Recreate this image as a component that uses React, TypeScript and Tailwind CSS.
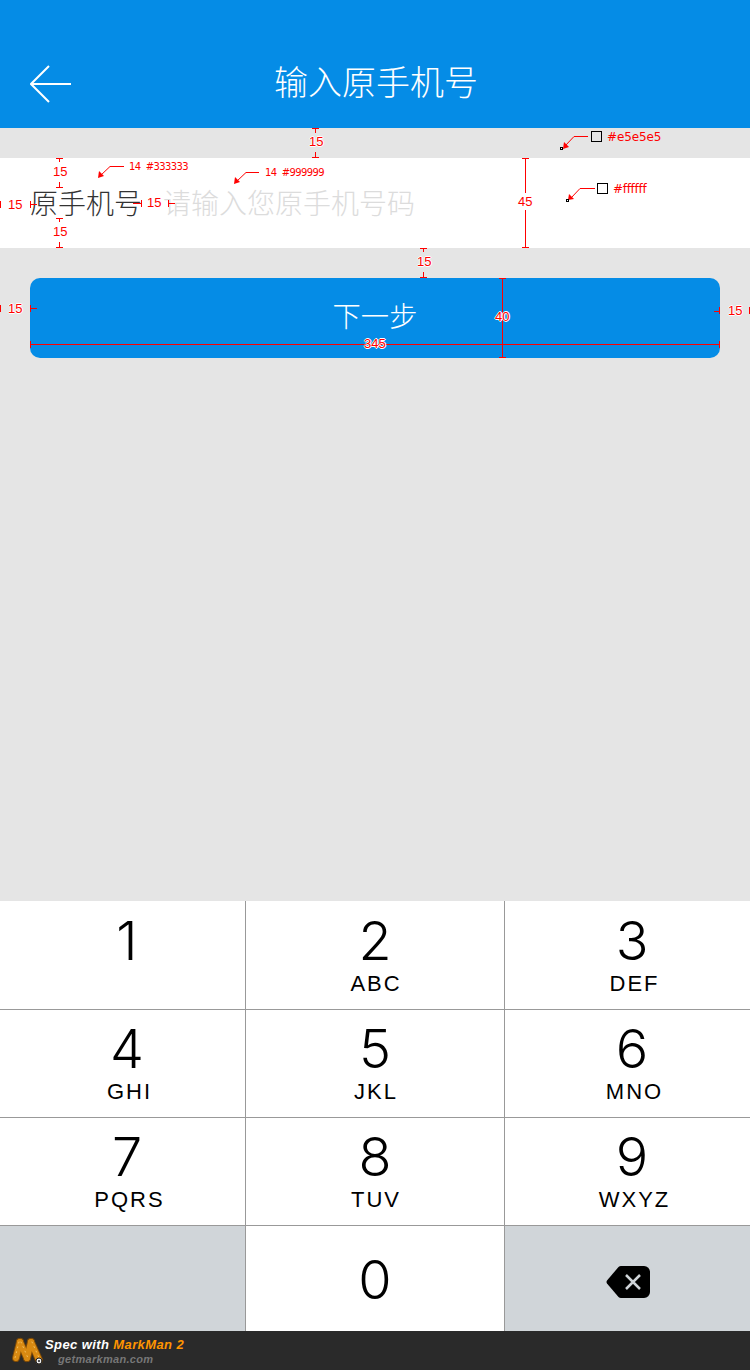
const CJK = "font-['Noto_Sans_CJK_SC','Noto_Sans',sans-serif]"

const keys = [
  { d: "1", l: "" },
  { d: "2", l: "ABC" },
  { d: "3", l: "DEF" },
  { d: "4", l: "GHI" },
  { d: "5", l: "JKL" },
  { d: "6", l: "MNO" },
  { d: "7", l: "PQRS" },
  { d: "8", l: "TUV" },
  { d: "9", l: "WXYZ" },
]

function Key({ d, l }: { d: string; l: string }) {
  return (
    <div className="h-[108px] [&:nth-child(-n+3)]:h-[109px] [&:nth-child(-n+3)]:pt-[7px] bg-white border-b border-[#999999] border-l [&:nth-child(3n+1)]:border-l-0 [&:nth-child(3n+1)]:pl-[9px] [&:nth-child(3n)]:pl-[9px] [&:nth-child(3n+1)_.letters]:ml-[5px] [&:nth-child(3n)_.letters]:ml-[5px] flex flex-col items-center pt-[6px] text-black">
      <div className="text-[54px] leading-[65px] font-light font-['Inter',Arial,sans-serif]">{d}</div>
      <div className="letters ml-[2px] text-[22px] leading-[26px] tracking-[2px] mt-[-2px] font-['Liberation_Sans',Arial,sans-serif]">{l}</div>
    </div>
  )
}

// red spec labels from the MarkMan export
function Num({ className, children }: { className: string; children: React.ReactNode }) {
  return (
    <span className={"absolute text-[13px] text-[#ff0000] font-['Liberation_Sans',sans-serif] leading-none whitespace-nowrap [text-shadow:1px_0_0_#fff,-1px_0_0_#fff,0_1px_0_#fff,0_-1px_0_#fff] " + className}>
      {children}
    </span>
  )
}

function Note({ className, children }: { className: string; children: React.ReactNode }) {
  return (
    <span className={"absolute text-[#ff0000] font-['DejaVu_Sans',sans-serif] leading-none whitespace-nowrap " + className}>
      {children}
    </span>
  )
}

function SpecOverlay() {
  const vert = [
    [315, 128, 158, 133, 152],
    [59, 158, 188, 162, 182],
    [59, 218, 248, 222, 242],
    [525, 158, 248, 193, 210],
    [423, 248, 278, 252, 272],
  ]
  return (
    <>
      <svg className="absolute inset-0 pointer-events-none" width="750" height="1370" shapeRendering="crispEdges">
        <g stroke="#ff0000" strokeWidth="1" fill="none">
          {vert.map(([x, a, b, g1, g2]) => (
            <g key={`${x}-${a}`}>
              <path d={`M${x + 0.5} ${a}V${g1}M${x + 0.5} ${g2}V${b}`} />
              <path d={`M${x - 3} ${a + 0.5}H${x + 4}M${x - 3} ${b - 0.5}H${x + 4}`} />
            </g>
          ))}
          <path d="M0.5 201V208M30.5 201V208M30 204.5H37" />
          <path d="M141.5 200V207M133 203.500H141M168.5 200V207M168 203.500H175" />
          <path d="M0.5 305V312M30.5 305V312M30 308.500H37" />
          <path d="M719.5 307V314M714 311.500H720M749.5 307V314" />
          <path d="M502.5 278V358M499 278.5H506M499 357.5H506M30.5 341V348M719.5 341V348M30 344.5H720" />
        </g>
        <g shapeRendering="auto" stroke="#ff0000" fill="none">
          <path d="M124 166.5H110L100 176" />
          <path d="M259 172.5H246L236 182" />
          <path d="M588 136.5H574L565 146" />
          <path d="M595 188.5H580L571 198" />
        </g>
        <g shapeRendering="auto" fill="#ff0000">
          <path d="M98 178L99 171L104 176Z" />
          <path d="M234 184L235 177L240 182Z" />
          <path d="M563 149L564 142L569 147Z" />
          <path d="M568 200L569 194L574 199Z" />
        </g>
        <g fill="#fff" stroke="#000">
          <rect x="591.5" y="131.5" width="10" height="10" fill="none" />
          <rect x="597.5" y="183.5" width="10" height="10" fill="none" />
          <rect x="560.5" y="147.5" width="2" height="2" />
          <rect x="566.5" y="199.5" width="2" height="2" />
        </g>
      </svg>
      <Num className="left-[309px] top-[135px]">15</Num>
      <Num className="left-[53px] top-[165px]">15</Num>
      <Num className="left-[53px] top-[225px]">15</Num>
      <Num className="left-[8px] top-[198px]">15</Num>
      <Num className="left-[147px] top-[196px]">15</Num>
      <Num className="left-[518px] top-[195px]">45</Num>
      <Num className="left-[417px] top-[255px]">15</Num>
      <Num className="left-[8px] top-[302px]">15</Num>
      <Num className="left-[728px] top-[304px]">15</Num>
      <Num className="left-[495px] top-[310px]">40</Num>
      <Num className="left-[364px] top-[337px]">345</Num>
      <Note className="left-[129px] top-[162px] text-[10px] tracking-[-0.6px]">14&nbsp;&nbsp;#333333</Note>
      <Note className="left-[265px] top-[168px] text-[10px] tracking-[-0.6px]">14&nbsp;&nbsp;#999999</Note>
      <Note className="left-[607px] top-[131px] text-[12px] tracking-[-0.1px]">#e5e5e5</Note>
      <Note className="left-[613px] top-[183px] text-[12px] tracking-[-0.3px]">#ffffff</Note>
    </>
  )
}

export default function App() {
  return (
    <div className={"relative w-[750px] h-[1370px] overflow-hidden flex flex-col bg-[#e5e5e5] " + CJK}>
      <header className="h-[128px] pt-[40px] shrink-0 bg-[#058ce6] px-[30px] grid grid-cols-[1fr_auto_1fr] items-center text-white">
        <svg width="42" height="38" viewBox="0 0 42 38" fill="none" stroke="#fff" strokeWidth="2">
          <path d="M19 1L1 19L19 37M1 19H41" />
        </svg>
        <h1 className="text-[34px] font-light leading-none ml-[2px] mb-[7px]">输入原手机号</h1>
        <div />
      </header>

      <div className="mt-[30px] h-[90px] shrink-0 bg-white flex items-center px-[30px] pb-[2px] gap-[21px] text-[28px] font-light">
        <span className="text-[#333333]">原手机号</span>
        <span className="text-[#dcdcdc]">请输入您原手机号码</span>
      </div>

      <button className="mt-[30px] mx-[30px] h-[80px] shrink-0 rounded-[10px] bg-[#058ce6] text-white text-[28.3px] font-light pb-[5px]">
        下一步
      </button>

      <div className="mt-auto grid grid-cols-[245px_259px_246px]">
        {keys.map((k) => (
          <Key key={k.d} d={k.d} l={k.l} />
        ))}
        <div className="h-[105px] bg-[#d0d5d9]" />
        <div className="h-[105px] bg-white border-l border-[#999999] flex justify-center pt-[21px] text-black text-[54px] leading-[65px] font-light font-['Inter',Arial,sans-serif]">
          0
        </div>
        <div className="h-[105px] bg-[#d0d5d9] border-l border-[#999999] flex justify-center pt-[40px]">
          <svg width="44" height="32" viewBox="0 0 44 32">
            <path d="M15 0H38A6 6 0 0 1 44 6V26A6 6 0 0 1 38 32H15Q13.500 32 12.500 31L1 17.500Q0 16 1 14.500L12.500 1Q13.500 0 15 0Z" fill="#000" />
            <path d="M20 9L34 23M34 9L20 23" stroke="#d0d5d9" strokeWidth="2.500" />
          </svg>
        </div>
      </div>

      <footer className="h-[39px] shrink-0 bg-[#2a2a2a] flex items-start pl-[12px] pt-[6px] gap-[1px]">
        <svg width="32" height="28" viewBox="0 0 32 28" fill="none" strokeLinecap="round">
          <g stroke="#7d4a08" strokeWidth="8">
            <path d="M8 5L4 21" />
            <path d="M8 5L15 21" />
            <path d="M19 5L15 21" />
            <path d="M19 5L27 23" />
          </g>
          <g stroke="#d98a12" strokeWidth="6">
            <path d="M8 5L4 21" />
            <path d="M8 5L15 21" />
            <path d="M19 5L15 21" />
            <path d="M19 5L27 23" />
          </g>
          <g stroke="#f5c060" strokeWidth="1" strokeDasharray="1 4">
            <path d="M7 5L3 21" />
            <path d="M9 5L16 21" />
            <path d="M20 5L28 23" />
          </g>
          <circle cx="27" cy="24" r="3" fill="#eee" stroke="#222" />
          <circle cx="27" cy="24" r="1" fill="#222" />
        </svg>
        <div className="flex flex-col font-['Liberation_Sans',sans-serif] italic font-bold">
          <div className="text-[13px] leading-[16px] tracking-[0.4px] text-white">
            Spec with <span className="text-[#ff9500]">MarkMan 2</span>
          </div>
          <div className="text-[11px] leading-[12px] tracking-[0.3px] text-[#777777] ml-[13px]">getmarkman.com</div>
        </div>
      </footer>

      <SpecOverlay />
    </div>
  )
}
